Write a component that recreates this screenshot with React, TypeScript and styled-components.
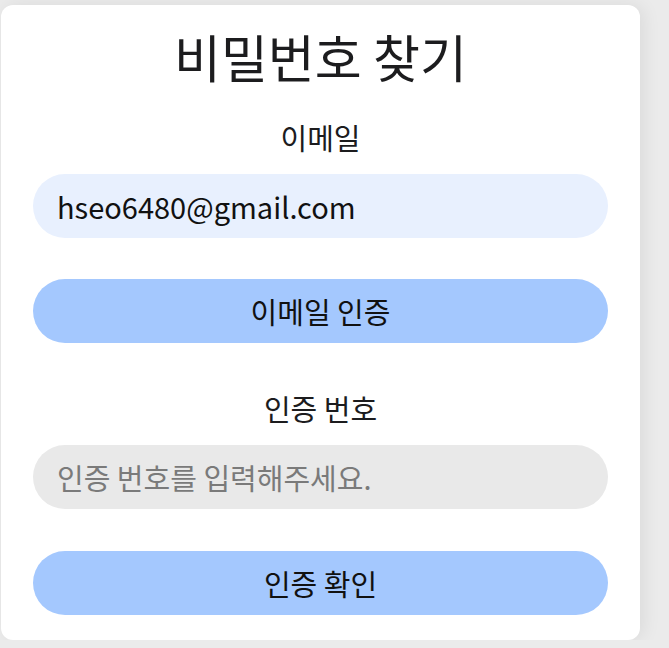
import React from "react";
import styled, { createGlobalStyle } from "styled-components";

const GlobalStyle = createGlobalStyle`
  html, body {
    margin: 0;
    padding: 0;
    background: #ebebeb;
    font-family: "Noto Sans CJK KR", "Noto Sans", sans-serif;
  }
  * { box-sizing: border-box; }
`;

const Page = styled.div`
  padding: 5px 0 0 1px;
`;

const Card = styled.form`
  width: 639px;
  height: 635px;
  background: #ffffff;
  border-radius: 12px;
  box-shadow: 4px 0 18px rgba(0, 0, 0, 0.07);
  padding: 17px 32px 25px;
  display: flex;
  flex-direction: column;
  align-items: stretch;
`;

const Title = styled.h1`
  margin: 0;
  font-size: 51px;
  line-height: 68px;
  font-weight: 400;
  color: #1c1c1e;
  text-align: center;
`;

const Label = styled.label<{ $top: number }>`
  display: block;
  margin-top: ${(p) => p.$top}px;
  font-size: 29px;
  line-height: 40px;
  color: #1c1c1e;
  text-align: center;
`;

const Input = styled.input<{ $filled?: boolean }>`
  margin-top: 17px;
  height: 64px;
  width: 100%;
  border: none;
  outline: none;
  border-radius: 32px;
  padding: 0 24px;
  font-family: inherit;
  font-size: 29px;
  color: #111;
  background: ${(p) => (p.$filled ? "#e8f0fe" : "#e9e9e9")};
  &::placeholder {
    color: #7a7a7a;
  }
`;

const Button = styled.button<{ $top: number }>`
  margin-top: ${(p) => p.$top}px;
  height: 64px;
  width: 100%;
  border: none;
  border-radius: 32px;
  background: #a4c8fe;
  font-family: inherit;
  font-size: 29px;
  color: #111;
  cursor: pointer;
`;

export default function App() {
  return (
    <>
      <GlobalStyle />
      <Page>
        <Card onSubmit={(e) => e.preventDefault()}>
          <Title>비밀번호 찾기</Title>
          <Label $top={27}>이메일</Label>
          <Input $filled defaultValue="hseo6480@gmail.com" />
          <Button type="button" $top={41}>이메일 인증</Button>
          <Label $top={45}>인증 번호</Label>
          <Input placeholder="인증 번호를 입력해주세요." />
          <Button type="button" $top={42}>인증 확인</Button>
        </Card>
      </Page>
    </>
  );
}
